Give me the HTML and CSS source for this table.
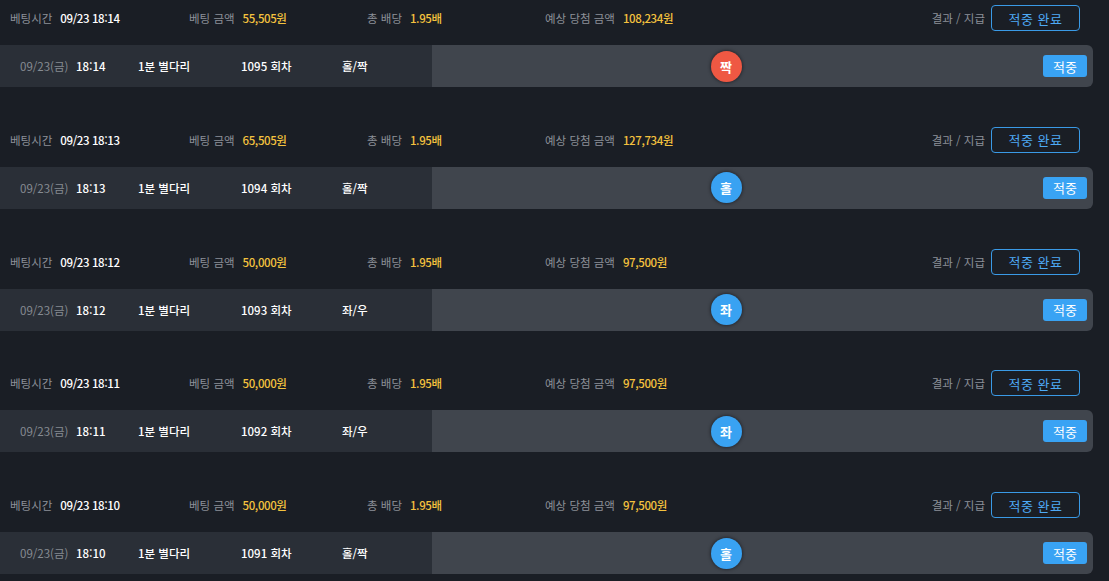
FILE: index.html
```html
<!DOCTYPE html>
<html lang="ko">
<head>
<meta charset="utf-8">
<link rel="stylesheet" href="styles.css">
</head>
<body>
<div class="list">
  <div class="block">
    <div class="head">
      <div class="grp g1"><span class="lbl">베팅시간</span><span class="val">09/23 18:14</span></div>
      <div class="grp g2"><span class="lbl">베팅 금액</span><span class="val y">55,505원</span></div>
      <div class="grp g3"><span class="lbl">총 배당</span><span class="val y">1.95배</span></div>
      <div class="grp g4"><span class="lbl">예상 당첨 금액</span><span class="val y">108,234원</span></div>
      <div class="res"><span class="lbl">결과 / 지급</span><button class="done">적중 완료</button></div>
    </div>
    <div class="row">
      <div class="left">
        <span class="c date">09/23(금)</span><span class="c time">18:14</span><span class="c game">1분 별다리</span><span class="c round">1095 회차</span><span class="c type">홀/짝</span>
      </div>
      <div class="right">
        <div class="badge-cell"><span class="ball red">짝</span></div>
        <div class="btn-cell"><span class="hit">적중</span></div>
      </div>
    </div>
  </div>

  <div class="block">
    <div class="head">
      <div class="grp g1"><span class="lbl">베팅시간</span><span class="val">09/23 18:13</span></div>
      <div class="grp g2"><span class="lbl">베팅 금액</span><span class="val y">65,505원</span></div>
      <div class="grp g3"><span class="lbl">총 배당</span><span class="val y">1.95배</span></div>
      <div class="grp g4"><span class="lbl">예상 당첨 금액</span><span class="val y">127,734원</span></div>
      <div class="res"><span class="lbl">결과 / 지급</span><button class="done">적중 완료</button></div>
    </div>
    <div class="row">
      <div class="left">
        <span class="c date">09/23(금)</span><span class="c time">18:13</span><span class="c game">1분 별다리</span><span class="c round">1094 회차</span><span class="c type">홀/짝</span>
      </div>
      <div class="right">
        <div class="badge-cell"><span class="ball blue">홀</span></div>
        <div class="btn-cell"><span class="hit">적중</span></div>
      </div>
    </div>
  </div>

  <div class="block">
    <div class="head">
      <div class="grp g1"><span class="lbl">베팅시간</span><span class="val">09/23 18:12</span></div>
      <div class="grp g2"><span class="lbl">베팅 금액</span><span class="val y">50,000원</span></div>
      <div class="grp g3"><span class="lbl">총 배당</span><span class="val y">1.95배</span></div>
      <div class="grp g4"><span class="lbl">예상 당첨 금액</span><span class="val y">97,500원</span></div>
      <div class="res"><span class="lbl">결과 / 지급</span><button class="done">적중 완료</button></div>
    </div>
    <div class="row">
      <div class="left">
        <span class="c date">09/23(금)</span><span class="c time">18:12</span><span class="c game">1분 별다리</span><span class="c round">1093 회차</span><span class="c type">좌/우</span>
      </div>
      <div class="right">
        <div class="badge-cell"><span class="ball blue">좌</span></div>
        <div class="btn-cell"><span class="hit">적중</span></div>
      </div>
    </div>
  </div>

  <div class="block">
    <div class="head">
      <div class="grp g1"><span class="lbl">베팅시간</span><span class="val">09/23 18:11</span></div>
      <div class="grp g2"><span class="lbl">베팅 금액</span><span class="val y">50,000원</span></div>
      <div class="grp g3"><span class="lbl">총 배당</span><span class="val y">1.95배</span></div>
      <div class="grp g4"><span class="lbl">예상 당첨 금액</span><span class="val y">97,500원</span></div>
      <div class="res"><span class="lbl">결과 / 지급</span><button class="done">적중 완료</button></div>
    </div>
    <div class="row">
      <div class="left">
        <span class="c date">09/23(금)</span><span class="c time">18:11</span><span class="c game">1분 별다리</span><span class="c round">1092 회차</span><span class="c type">좌/우</span>
      </div>
      <div class="right">
        <div class="badge-cell"><span class="ball blue">좌</span></div>
        <div class="btn-cell"><span class="hit">적중</span></div>
      </div>
    </div>
  </div>

  <div class="block">
    <div class="head">
      <div class="grp g1"><span class="lbl">베팅시간</span><span class="val">09/23 18:10</span></div>
      <div class="grp g2"><span class="lbl">베팅 금액</span><span class="val y">50,000원</span></div>
      <div class="grp g3"><span class="lbl">총 배당</span><span class="val y">1.95배</span></div>
      <div class="grp g4"><span class="lbl">예상 당첨 금액</span><span class="val y">97,500원</span></div>
      <div class="res"><span class="lbl">결과 / 지급</span><button class="done">적중 완료</button></div>
    </div>
    <div class="row">
      <div class="left">
        <span class="c date">09/23(금)</span><span class="c time">18:10</span><span class="c game">1분 별다리</span><span class="c round">1091 회차</span><span class="c type">홀/짝</span>
      </div>
      <div class="right">
        <div class="badge-cell"><span class="ball blue">홀</span></div>
        <div class="btn-cell"><span class="hit">적중</span></div>
      </div>
    </div>
  </div>
</div>
</body>
</html>
```

FILE: styles.css
```css
* { box-sizing: border-box; }
html, body {
  margin: 0;
  padding: 0;
  background: #1a1e25;
  width: 1109px;
  height: 581px;
  overflow: hidden;
  font-family: "Noto Sans CJK KR", "Noto Sans", sans-serif;
  font-size: 11.5px;
  color: #ffffff;
}
.list { display: flex; flex-direction: column; }
.block { margin-bottom: 34.75px; }
.head {
  height: 45px;
  display: flex;
  align-items: flex-start;
  padding: 5px 29px 0 10px;
}
.grp {
  height: 26px;
  display: flex;
  align-items: center;
  white-space: nowrap;
}
.g1 { width: 179px; }
.g2 { width: 178px; }
.g3 { width: 178px; }
.g4 { flex: 1; }
.lbl { color: #8c9098; margin-right: 8px; }
.val { color: #ffffff; font-weight: 500; letter-spacing: -0.4px; }
.val.y { color: #f4c23e; }
.res { display: flex; align-items: center; height: 26px; }
.res .lbl { margin-right: 6px; }
.done {
  width: 89px;
  height: 26px;
  border: 1px solid #3a9ae6;
  border-radius: 4px;
  background: transparent;
  color: #4eaaf6;
  font-family: inherit;
  font-size: 13px;
  padding: 0;
  letter-spacing: 0.5px;
}
.row {
  height: 42px;
  display: flex;
  margin-right: 16px;
}
.left {
  width: 432px;
  background: #2a2f37;
  display: flex;
  align-items: center;
  padding-left: 20px;
  white-space: nowrap;
}
.c { display: block; }
.date { width: 56px; color: #868b92; }
.time { width: 62px; font-weight: 500; }
.game { width: 103px; font-weight: 500; }
.round { width: 101px; font-weight: 500; }
.type { font-weight: 500; }
.right {
  flex: 1;
  background: #40454d;
  border-radius: 0 6px 6px 0;
  display: flex;
  align-items: center;
}
.badge-cell { flex: 1; display: flex; justify-content: center; }
.btn-cell { width: 73px; display: flex; justify-content: flex-end; padding-right: 6px; }
.ball {
  width: 31px;
  height: 31px;
  border-radius: 50%;
  display: flex;
  align-items: center;
  justify-content: center;
  font-size: 13px;
  font-weight: 700;
  color: #ffffff;
  box-shadow: 0 0 3px 1px rgba(20, 22, 28, 0.55);
}
.ball.red { background: #ef5843; }
.ball.blue { background: #39a2f2; }
.hit {
  width: 44px;
  height: 22px;
  border-radius: 3px;
  background: #39a3f4;
  color: #ffffff;
  font-size: 13px;
  display: flex;
  align-items: center;
  justify-content: center;
}
```
